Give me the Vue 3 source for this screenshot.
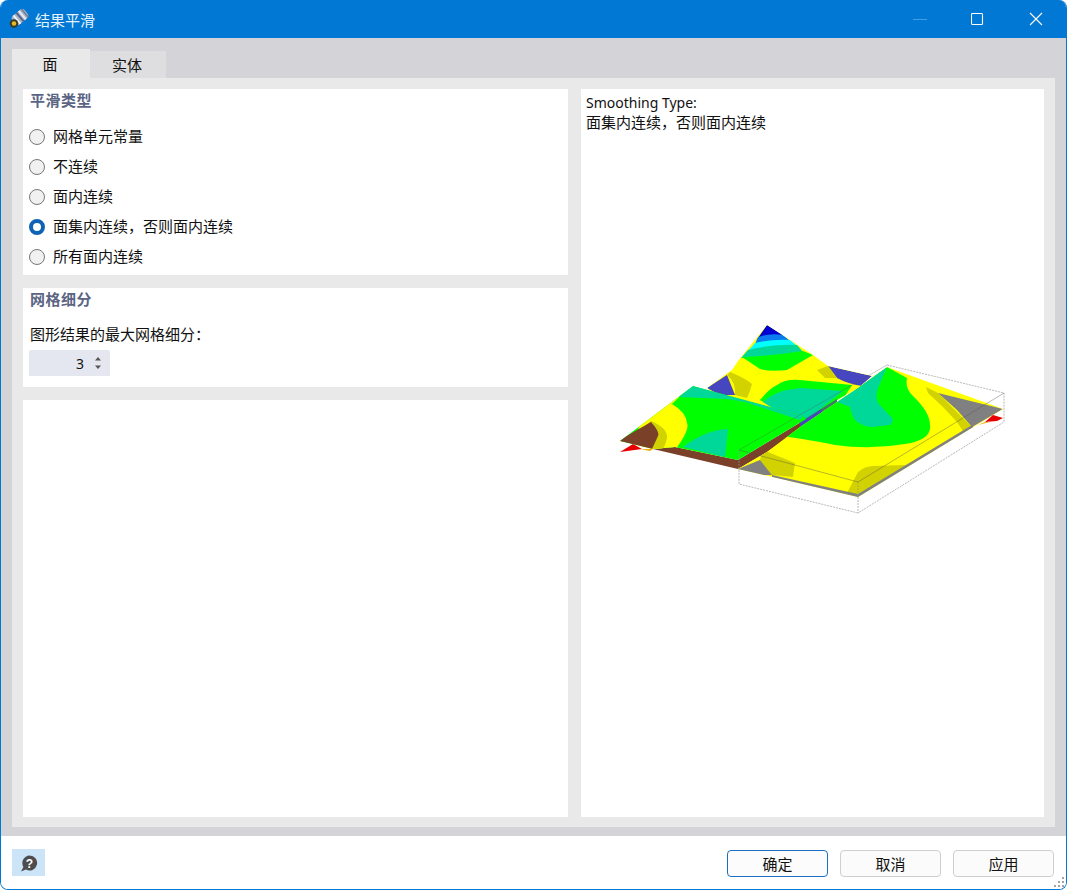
<script setup>
const options = [
  { label: '网格单元常量', on: false },
  { label: '不连续', on: false },
  { label: '面内连续', on: false },
  { label: '面集内连续\uFF0C否则面内连续', on: true },
  { label: '所有面内连续', on: false },
]
const meshLabel = '图形结果的最大网格细分\uFF1A'
const summary = '面集内连续\uFF0C否则面内连续'
const grip = [[8,0],[4,4],[8,4],[0,8],[4,8],[8,8]]
</script>

<template>
  <div class="window">
    <header class="titlebar">
      <svg class="app-icon" width="20" height="20" viewBox="0 0 20 20">
        <g transform="rotate(-40 11 8)">
          <rect x="3" y="2.500" width="16" height="11" rx="3.500" fill="#a9b3c6" />
          <rect x="6" y="2.500" width="2" height="11" fill="#eef1f7" />
          <rect x="10" y="2.500" width="2" height="11" fill="#55648a" />
          <rect x="13" y="2.500" width="2" height="11" fill="#e6eaf2" />
          <rect x="16.500" y="2.500" width="1.500" height="11" fill="#6f7c98" />
        </g>
        <circle cx="5" cy="14.500" r="4.200" fill="#3b3a26" />
        <circle cx="5" cy="14.500" r="2.300" fill="#e3b82a" />
      </svg>
      <span class="title">结果平滑</span>
      <div class="controls">
        <button class="ctl">
          <svg width="14" height="14" viewBox="0 0 14 14"><path d="M0 7.500H14" stroke="#3f9fe6" stroke-width="1" /></svg>
        </button>
        <button class="ctl">
          <svg width="14" height="14" viewBox="0 0 14 14"><rect x="0.500" y="1.500" width="11" height="11" rx="1" fill="none" stroke="#fff" stroke-width="1.100" /></svg>
        </button>
        <button class="ctl">
          <svg width="14" height="14" viewBox="0 0 14 14"><path d="M1 1L13 13M13 1L1 13" stroke="#fff" stroke-width="1.100" /></svg>
        </button>
      </div>
    </header>

    <main class="body">
      <nav class="tabs">
        <div class="tab active">面</div>
        <div class="tab">实体</div>
      </nav>
      <section class="pane">
        <div class="left">
          <div class="panel smoothing">
            <h3 class="heading">平滑类型</h3>
            <label v-for="o in options" :key="o.label" class="radio-row">
              <span class="radio" :class="{ on: o.on }"></span>
              <span class="radio-text">{{ o.label }}</span>
            </label>
          </div>
          <div class="panel mesh">
            <h3 class="heading">网格细分</h3>
            <div class="mesh-label">{{ meshLabel }}</div>
            <div class="spinner">
              <span class="spin-value">3</span>
              <span class="arrows">
                <svg width="8" height="14" viewBox="0 0 8 14">
                  <path d="M4 1L7 4.500H1Z" fill="#555" />
                  <path d="M4 13L7 9.500H1Z" fill="#555" />
                </svg>
              </span>
            </div>
          </div>
          <div class="panel filler"></div>
        </div>

        <div class="panel right">
          <div class="desc">
            <div class="desc-en">Smoothing Type:</div>
            <div class="desc-zh">{{ summary }}</div>
          </div>
          <svg class="plot" viewBox="581 132 463 685" preserveAspectRatio="xMinYMin meet">
            <defs>
              <clipPath id="backClip">
                <polygon points="767,325 813,355 828,366 872,376 858,388 837,400 800,423 720,398 707,388 732,370 738,361" />
              </clipPath>
              <clipPath id="frontClip">
                <polygon points="693,386 803,416 806,419 738,460 675,447 653,449 620,441" />
              </clipPath>
              <clipPath id="rightClip">
                <polygon points="887,367 1003,409 858,497 738,469 767,452 800,427 837,402 858,388" />
              </clipPath>
            </defs>

            <!-- back wing -->
            <g clip-path="url(#backClip)">
              <rect x="690" y="320" width="190" height="110" fill="#ffff00" />
              <path d="M767,325L783,335L758,338Z" fill="#0000d0" />
              <path d="M758,337Q770,333 783,335L790,341Q772,340 755,344Z" fill="#0a7cf0" />
              <path d="M755,343Q772,339 790,340L797,346Q770,345 748,351Z" fill="#00ffff" />
              <path d="M748,350Q772,344 797,345L803,352Q772,356 741,358Z" fill="#00d89a" />
              <path d="M742,357Q772,356 803,351L813,355L787,370Q770,372 760,369Z" fill="#00ff00" />
              <path d="M707,388L727,375L735,395L720,395Z" fill="#4646c0" />
              <path d="M730,372Q745,378 752,384Q750,392 747,398L735,395Q736,382 727,375Z" fill="#d2d200" />
              <path d="M828,366L872,376L862,386Q848,384 837,378Z" fill="#4646c0" />
              <path d="M817,370L828,366L837,378L825,378Z" fill="#d2d200" />
              <path d="M760,400Q770,388 777,385Q785,379 800,380L852,385L845,396L800,425Z" fill="#00ff00" />
              <path d="M763,402Q775,392 787,390L800,388L843,391L800,425Z" fill="#00d89a" />
            </g>

            <!-- sliver and front strip under the front wing -->
            <polygon points="653,449 675,447 738,460 806,419 820,412 820,415 767,452 738,469" fill="#7a4028" />
            <polygon points="800,422 837,399 837,403 800,428" fill="#3d7a6a" />
            <polygon points="800,423 822,409 822,413 800,428" fill="#4646c0" />
            <polygon points="620,452 633,444 642,449" fill="#e80000" />
            <polygon points="640,449 653,449 650,451" fill="#f0b000" />

            <!-- front wing -->
            <g clip-path="url(#frontClip)">
              <rect x="615" y="380" width="200" height="90" fill="#00ff00" />
              <path d="M672,404L693,384L640,420L635,450L675,450Q690,430 687,423Q686,412 672,404Z" fill="#ffff00" />
              <path d="M640,430L651,421Q668,428 667,438Q665,448 660,452L640,452Z" fill="#d2d200" />
              <path d="M618,441L651,422Q660,432 658,436L652,449Z" fill="#7a4028" />
              <path d="M683,447Q705,430 728,429L725,457Z" fill="#00d89a" />
              <path d="M693,386L803,416L800,420L745,402L727,399L678,397Z" fill="#00d89a" />
            </g>

            <!-- right wing -->
            <g clip-path="url(#rightClip)">
              <rect x="735" y="360" width="275" height="140" fill="#ffff00" />
              <path d="M887,367L907,378Q905,388 912,395Q930,412 930,425Q932,440 905,444Q870,450 835,445Q800,438 780,436Q765,436 757,450L800,420L850,392Z" fill="#00ff00" />
              <path d="M887,367L858,388L837,402L850,407Q852,418 857,422Q865,427 872,427L890,425Q894,421 892,418L878,403Q875,396 878,388Z" fill="#00d89a" />
              <path d="M926,387L938,393L972,427L963,431L957,422L943,407L928,393Z" fill="#d2d200" />
              <path d="M938,393L1003,409L972,427L957,410Z" fill="#808080" />
              <path d="M847,493L858,472Q865,466 873,466L907,465L858,497Z" fill="#d2d200" />
              <path d="M763,450L795,463L793,477L772,475L760,460Z" fill="#d2d200" />
              <path d="M738,469L760,460L772,475L738,475Z" fill="#808080" />
              <path d="M772,475L858,494L972,425L974,428L858,498L772,478Z" fill="#808080" />
            </g>
            <polygon points="985,422 993,415 1003,418 997,421" fill="#e80000" />
            <polygon points="978,425 985,422 990,422" fill="#f0b000" />

            <!-- bounding box -->
            <g fill="none" stroke="#9a9a9a" stroke-width="0.700">
              <path d="M887,365L1004,393V422L858,513L739,484V450" stroke-dasharray="2 1" />
              <path d="M739,450L887,365" stroke="#555" stroke-opacity="0.450" />
              <path d="M739,450L858,482L1004,393" stroke="#555" stroke-opacity="0.600" />
              <path d="M858,482V513" stroke-dasharray="2 1" />
            </g>
          </svg>
        </div>
      </section>
    </main>

    <footer class="footer">
      <button class="help">
        <svg width="20" height="20" viewBox="0 0 20 20">
          <path d="M10.500 2.500a7.500 7.500 0 1 1-3.600 14L2 18.500l2.400-4.600A7.500 7.500 0 0 1 10.500 2.500Z" fill="#4d4d4d" />
          <text x="10.500" y="14.500" text-anchor="middle" class="help-q">?</text>
        </svg>
      </button>
      <div class="actions">
        <button class="btn primary">确定</button>
        <button class="btn">取消</button>
        <button class="btn">应用</button>
      </div>
      <svg class="grip" width="11" height="11" viewBox="0 0 11 11">
        <rect v-for="(g, i) in grip" :key="i" :x="g[0]" :y="g[1]" width="2" height="2" fill="#a4a4a4" />
      </svg>
    </footer>
  </div>
</template>

<style scoped>
.window {
  position: relative;
  width: 1067px;
  height: 890px;
  box-sizing: border-box;
  display: flex;
  flex-direction: column;
  border: 1px solid #0078d4;
  border-top: 0;
  border-radius: 8px;
  overflow: hidden;
  background: #fff;
  font-family: "Noto Sans", "Noto Sans CJK SC", sans-serif;
  font-size: 14px;
  color: #111;
}
.titlebar {
  height: 38px;
  flex: none;
  display: flex;
  align-items: center;
  background: #0078d4;
  margin: 0 -1px;
  padding-left: 9px;
  color: #fff;
}
.app-icon { flex: none; }
.title {
  margin-left: 6px;
  font-size: 15px;
  font-family: "Noto Sans CJK SC", sans-serif;
  color: #e6f3fd;
}
.controls { margin-left: auto; margin-right: 2px; display: flex; }
.ctl {
  width: 58px;
  height: 38px;
  border: 0;
  padding: 0;
  background: none;
  display: flex;
  align-items: center;
  justify-content: center;
}
.body {
  flex: 1;
  display: flex;
  flex-direction: column;
  min-height: 0;
  background: #d3d3d8;
  padding: 11px 11px 9px;
}
.tabs { display: flex; align-items: flex-end; height: 29px; flex: none; }
.tab {
  width: 76px;
  height: 27px;
  box-sizing: border-box;
  padding-right: 2px;
  display: flex;
  align-items: center;
  justify-content: center;
  background: #dedee0;
  font-size: 15px;
  font-family: "Noto Sans CJK SC", sans-serif;
}
.tab.active { width: 78px; height: 29px; background: #e9e9e9; }
.pane {
  flex: 1;
  min-height: 0;
  display: flex;
  gap: 13px;
  padding: 11px 11px 10px;
  background: #e9e9e9;
}
.left {
  width: 545px;
  flex: none;
  display: flex;
  flex-direction: column;
  gap: 13px;
}
.panel { background: #fff; box-sizing: border-box; }
.heading {
  margin: 0;
  height: 24px;
  line-height: 22px;
  padding-left: 1px;
  font-size: 15px;
  font-weight: 700;
  letter-spacing: 0.500px;
  font-family: "Noto Sans CJK SC", sans-serif;
  color: #5b6583;
}
.smoothing { height: 186px; padding: 0 6px 3px; }
.smoothing .heading { margin-bottom: 9px; }
.radio-row {
  height: 30px;
  display: flex;
  align-items: center;
  gap: 8px;
  font-size: 15px;
  font-family: "Noto Sans CJK SC", sans-serif;
}
.radio-text { padding-bottom: 3px; }
.radio {
  width: 16px;
  height: 16px;
  box-sizing: border-box;
  border: 1px solid #777;
  border-radius: 50%;
  background: #f1f1f1;
  flex: none;
}
.radio.on { border: 4.500px solid #0f62b4; background: #fff; }
.mesh { height: 99px; padding: 0 6px 11px; }
.mesh-label {
  margin-top: 12px;
  height: 20px;
  line-height: 20px;
  padding-left: 1px;
  font-size: 15px;
  font-family: "Noto Sans CJK SC", sans-serif;
}
.spinner {
  margin-top: 6px;
  width: 81px;
  height: 26px;
  display: flex;
  align-items: center;
  justify-content: flex-end;
  background: #e4e6f0;
  border-radius: 2px 2px 0 0;
}
.spin-value { font-size: 14px; margin-right: 10px; }
.arrows { width: 8px; margin-right: 8px; display: flex; }
.filler { flex: 1; }
.right {
  flex: 1;
  min-width: 0;
  display: flex;
  flex-direction: column;
}
.desc {
  padding: 4px 5px 0;
  flex: none;
}
.desc-en { height: 19px; line-height: 19px; font-size: 14px; }
.desc-zh { height: 20px; line-height: 20px; font-size: 15px; font-family: "Noto Sans CJK SC", sans-serif; }
.plot { display: block; width: 463px; height: 685px; flex: none; }
.footer {
  height: 53px;
  flex: none;
  display: flex;
  align-items: center;
  padding: 0 12px 0 11px;
  box-sizing: border-box;
  background: #fff;
}
.help {
  width: 33px;
  height: 27px;
  border: 0;
  padding: 0;
  background: #cce4f7;
  display: flex;
  align-items: center;
  justify-content: center;
}
.help-q {
  font-family: "Liberation Sans", sans-serif;
  font-size: 12px;
  font-weight: 700;
  fill: #fff;
}
.actions { margin-left: auto; margin-top: 2px; display: flex; gap: 12px; }
.btn {
  width: 101px;
  height: 27px;
  padding: 0;
  border: 1px solid #cfcfcf;
  border-radius: 4px;
  background: #fbfbfb;
  color: #111;
  font-size: 15px;
  font-family: "Noto Sans CJK SC", sans-serif;
  line-height: 1;
}
.btn.primary { border-color: #1a6fc0; background: #fcfcfc; }
.grip { position: absolute; right: 1px; bottom: 1px; }
</style>

<style>
html, body { background: #fff; }
</style>
